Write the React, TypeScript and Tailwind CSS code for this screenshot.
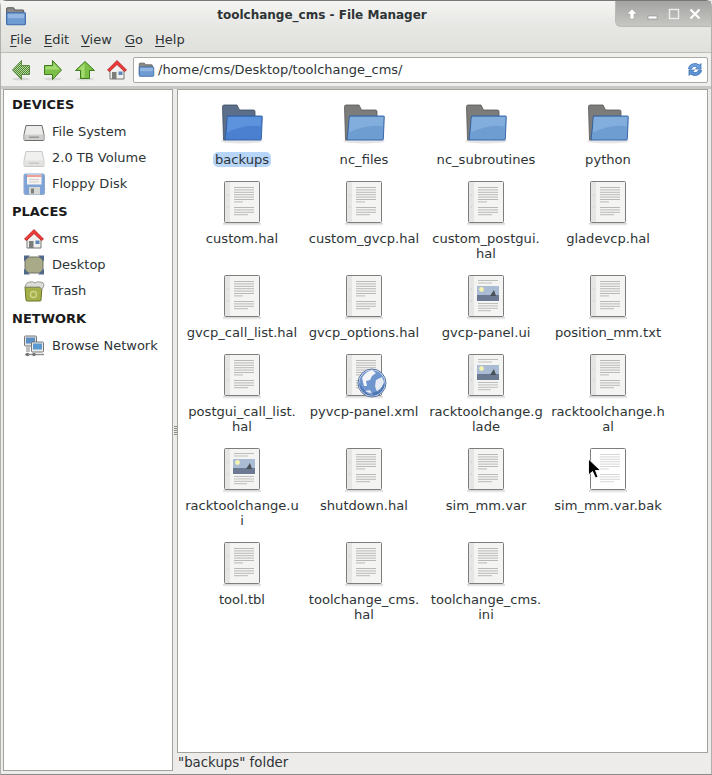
import React from 'react';

const FONT = "font-['DejaVu_Sans',sans-serif]";

// Shared small folder glyph (title bar, address bar)
const SmallFolder: React.FC<{ size: number }> = ({ size }) => (
  <svg width={size} height={size} viewBox="0 0 20 20">
    <path d="M1.5 3.5 a1 1 0 0 1 1-1 h5 l1.5 2 h7 a1 1 0 0 1 1 1 v10 h-15.5z" fill="#8a8a88" stroke="#5c5c5c" />
    <rect x="1.5" y="7" width="17" height="11" rx="0.8" fill="#6f9bd3" stroke="#3b69a8" />
    <rect x="2.5" y="8" width="15" height="4" fill="#93b6e0" />
  </svg>
);

const BigFolder: React.FC<{ dark?: boolean }> = ({ dark }) => {
  const back = dark ? '#5b6f8a' : '#7c7c7a';
  const backDark = dark ? '#3e4c60' : '#565654';
  const front = dark ? '#4a80cf' : '#6e9dd2';
  const frontLight = dark ? '#5d92dc' : '#82aedd';
  return (
    <svg width="48" height="48" viewBox="0 1 48 48">
      <ellipse cx="24" cy="41" rx="21" ry="2.5" fill="#000" opacity="0.1" />
      <path d="M4.5 6.5 a1.5 1.5 0 0 1 1.5-1.5 h13 l2.5 5 h14 a1.5 1.5 0 0 1 1.5 1.5 v5 h-27.5 l-1.5 23.5 h-2.5z" fill={back} stroke={backDark} strokeWidth="0.8" />
      <path d="M9.5 16 h34 a.8 .8 0 0 1 .8 .8 l-1 22.5 a.8 .8 0 0 1-.8 .7 h-34.5 a1 1 0 0 1-.9-1z" fill={front} stroke="#2c5da3" strokeWidth="0.9" />
      <path d="M9.8 17 h33.5 l-.5 9.5 q-15 -3 -33.8 6z" fill={frontLight} />
    </svg>
  );
};

const LINE_SET_A = [7, 9.4, 11.8, 14.2, 16.6, 19, 21.4];
const LINE_SET_B = [27, 29.4, 31.8, 34.2];

const Doc: React.FC<{ kind?: 'text' | 'image' | 'blank' | 'xml' }> = ({ kind = 'text' }) => {
  const white = kind === 'blank';
  return (
    <svg width="48" height="48" viewBox="0 0 48 48" className="overflow-visible">
      <defs>
        <linearGradient id={`shade-${kind}`} x1="0" y1="0" x2="0" y2="1">
          <stop offset="0" stopColor="#000" stopOpacity="0.18" />
          <stop offset="1" stopColor="#000" stopOpacity="0" />
        </linearGradient>
      </defs>
      <rect x="5" y="43" width="38" height="3" fill={`url(#shade-${kind})`} />
      <rect x="6.5" y="1.5" width="35" height="41" rx="1" fill={white ? '#fff' : '#f4f4f3'} stroke="#7d7d7d" />
      {!white && <rect x="7" y="2" width="5" height="40" fill="#e5e5e3" />}
      {!white && <circle cx="9.5" cy="15" r="0.6" fill="#c0c0c0" />}
      {!white && <circle cx="9.5" cy="27" r="0.6" fill="#c0c0c0" />}
      {kind === 'image' ? (
        <>
          <rect x="16" y="6" width="20" height="1" fill="#bdbdbb" />
          <rect x="16" y="8.5" width="14" height="1" fill="#bdbdbb" />
          <rect x="15" y="12" width="22" height="15" fill="#a9bcd4" />
          <rect x="15" y="21" width="22" height="6" fill="#6b7a92" />
          <circle cx="19.5" cy="15.5" r="2.4" fill="#f4f2b0" />
          <path d="M28 22 l4-6 l2 6z" fill="#4a5058" />
          <rect x="16" y="29" width="20" height="1" fill="#bdbdbb" />
          <rect x="16" y="31.4" width="20" height="1" fill="#bdbdbb" />
          <rect x="16" y="33.8" width="20" height="1" fill="#bdbdbb" />
          <rect x="16" y="36.2" width="13" height="1" fill="#bdbdbb" />
        </>
      ) : (
        <>
          {LINE_SET_A.map((y, i) => (
            <rect key={y} x="16" y={y} width={i === 6 ? 9 : 20} height="1" fill={white ? '#d8d8d8' : '#b8b8b6'} />
          ))}
          {LINE_SET_B.map((y, i) => (
            <rect key={y} x="16" y={y} width={i === 3 ? 14 : 20} height="1" fill={white ? '#d8d8d8' : '#b8b8b6'} />
          ))}
        </>
      )}
      {kind === 'xml' && (
        <g>
          <circle cx="32" cy="30" r="14" fill="#dfe7f3" stroke="#34548c" strokeWidth="0.8" />
          <circle cx="32" cy="30" r="12.8" fill="#6f95cf" />
          <path d="M22 25 q4-7 10-8 l4 3 -4 3 -2 4 -4 1 1 5 -3 0z" fill="#f3f5f8" />
          <path d="M36 27 l6-3 2 5 -3 7 -4 3 -2-6z" fill="#e6ebf3" />
          <path d="M25 38 q4 4 8 4 l-3-5z" fill="#dfe6f1" />
          <path d="M19.2 30 a12.8 12.8 0 0 0 25.6 0 q-6 9 -13 10 q-8 0 -12.6 -10z" fill="#2d5a9e" opacity="0.5" />
        </g>
      )}
    </svg>
  );
};

const Arrow: React.FC<{ dir: 'left' | 'right' | 'up'; dim?: boolean }> = ({ dir, dim }) => {
  const rot = dir === 'left' ? 180 : dir === 'up' ? -90 : 0;
  return (
    <svg width="22" height="22" viewBox="0 0 22 22">
      {dim && (
        <defs>
          <pattern id="dots" width="2" height="2" patternUnits="userSpaceOnUse">
            <rect width="1" height="1" fill="#4f8a2e" />
            <rect x="1" y="1" width="1" height="1" fill="#4f8a2e" />
            <rect x="1" width="1" height="1" fill="#b5d5a0" />
            <rect y="1" width="1" height="1" fill="#b5d5a0" />
          </pattern>
        </defs>
      )}
      <ellipse cx="11" cy="20" rx="9" ry="1.5" fill="#000" opacity="0.1" />
      <g transform={`rotate(${rot} 11 11)`}>
        <path
          d="M2.5 6.5 h8 v-5 l9 9.5 -9 9.5 v-5 h-8z"
          fill={dim ? 'url(#dots)' : '#7cc04a'}
          stroke={dim ? '#5c8a44' : '#3f7d1c'}
        />
        {!dim && <path d="M3.5 7.5 h8 v-3.5 l6 6.5 h-14z" fill="#a6db72" />}
      </g>
    </svg>
  );
};

const Home: React.FC<{ size: number }> = ({ size }) => (
  <svg width={size} height={size} viewBox="0 0 22 22">
    <path d="M4 10 v10 h14 v-10 l-7-6z" fill="#f0f0ee" stroke="#777" />
    <rect x="6" y="13" width="4.5" height="7" fill="#7c7c7a" />
    <rect x="12.5" y="12.5" width="4" height="3.5" fill="#5f86b8" />
    <path d="M1.5 11 L11 1.5 L20.5 11 L18.5 12.5 L11 5.5 L3.5 12.5z" fill="#ef3a3a" stroke="#b01818" strokeWidth="0.8" />
  </svg>
);

const Drive: React.FC<{ light?: boolean }> = ({ light }) => (
  <svg width="22" height="22" viewBox="0 0 22 22">
    <path d="M3 4.5 h16 l2 9 v5 a1 1 0 0 1-1 1 h-18 a1 1 0 0 1-1-1 v-5z" fill={light ? '#f0f0ee' : '#ececea'} stroke={light ? '#c8c8c6' : '#6e6e6c'} />
    <rect x="1.5" y="13.5" width="19" height="5.5" fill={light ? '#e2e2e0' : '#cfcfcd'} />
    <rect x="6" y="15.5" width="10" height="1.5" fill={light ? '#c8c8c6' : '#9a9a98'} />
  </svg>
);

const Floppy = () => (
  <svg width="22" height="22" viewBox="0 0 22 22">
    <rect x="1" y="1" width="20.5" height="20.5" rx="1.5" fill="#7fa3d6" stroke="#8ba8d0" />
    <rect x="4" y="1.5" width="14.5" height="10" fill="#f7f3f1" />
    <rect x="4" y="2" width="14.5" height="2" fill="#ef9d97" />
    <rect x="6" y="6" width="10" height="0.8" fill="#c8c8c8" />
    <rect x="6" y="8.5" width="10" height="0.8" fill="#c8c8c8" />
    <rect x="6" y="14" width="11" height="7.5" fill="#d7d7d5" />
    <rect x="8" y="15.5" width="3" height="5" fill="#808080" />
  </svg>
);

const DesktopIcon = () => (
  <svg width="22" height="22" viewBox="0 0 22 22">
    <rect x="2" y="3" width="18" height="16" rx="5" fill="#a8aa88" stroke="#6f7062" />
    <path d="M1 1.5 h6 l-6 6z M21 1.5 h-6 l6 6z M1 20.5 h6 l-6 -6z M21 20.5 h-6 l6 -6z" fill="#52688a" />
  </svg>
);

const Trash = () => (
  <svg width="22" height="22" viewBox="0 0 22 22">
    <path d="M2 7 h17 l-1 13 a1 1 0 0 1-1 1 h-13 a1 1 0 0 1-1-1z" fill="#a5b04a" stroke="#6b7428" />
    <path d="M2 7 q1-5 5-5 q3-1 5 1 q2-2 5-1 q4 0 4 3 q0 3-3 4 l-1-2 h-15z" fill="#dcdcd8" stroke="#8a8a84" strokeWidth="0.8" />
    <circle cx="10.5" cy="14.5" r="3" fill="none" stroke="#cfd78a" strokeWidth="1.4" />
  </svg>
);

const NetworkIcon = () => (
  <svg width="22" height="22" viewBox="0 0 22 22">
    <rect x="1.5" y="1" width="12" height="10" rx="1" fill="#e3e3e1" stroke="#77777a" />
    <rect x="3" y="2.5" width="9" height="6" fill="#5c8fc4" />
    <rect x="8.5" y="7" width="12" height="10" rx="1" fill="#ececea" stroke="#77777a" />
    <rect x="10" y="8.5" width="9" height="6" fill="#5a9ad0" />
    <rect x="3" y="12" width="4" height="5" fill="#bdbdbb" />
    <path d="M2 19.5 h19" stroke="#8d8d8b" strokeWidth="1.4" />
    <circle cx="4.5" cy="19.5" r="1.8" fill="#77777a" />
    <circle cx="11" cy="19.5" r="1.8" fill="#77777a" />
  </svg>
);

const Reload = () => (
  <svg width="16" height="17" viewBox="0 0 16 16">
    <path d="M1.5 7.5 a6.5 5.5 0 0 1 11-4 l1.5-1.5 v5.5 h-5.5 l1.8-1.8 a3.5 3 0 0 0 -5.8 1.8z" fill="#6fa3e0" stroke="#2f64ab" strokeWidth="0.7" />
    <path d="M14.5 8.5 a6.5 5.5 0 0 1 -11 4 l-1.5 1.5 v-5.5 h5.5 l-1.8 1.8 a3.5 3 0 0 0 5.8 -1.8z" fill="#5e95d6" stroke="#2f64ab" strokeWidth="0.7" />
  </svg>
);

const SidebarHeading: React.FC<{ children: React.ReactNode }> = ({ children }) => (
  <div className="h-[29px] pt-[1px] flex items-center pl-2 text-[13px] font-bold text-[#1a1a1a]">{children}</div>
);

const SidebarItem: React.FC<{ icon: React.ReactNode; label: string }> = ({ icon, label }) => (
  <div className="h-[26px] flex items-center pl-[19px] gap-[7px] text-[13px] text-[#2e3436]">
    <span className="w-[22px] h-[22px] shrink-0">{icon}</span>
    <span>{label}</span>
  </div>
);

interface FileEntry {
  name: string;
  icon: React.ReactNode;
  selected?: boolean;
}

const files: FileEntry[] = [
  { name: 'backups', icon: <BigFolder dark />, selected: true },
  { name: 'nc_files', icon: <BigFolder /> },
  { name: 'nc_subroutines', icon: <BigFolder /> },
  { name: 'python', icon: <BigFolder /> },
  { name: 'custom.hal', icon: <Doc /> },
  { name: 'custom_gvcp.hal', icon: <Doc /> },
  { name: 'custom_postgui.\nhal', icon: <Doc /> },
  { name: 'gladevcp.hal', icon: <Doc /> },
  { name: 'gvcp_call_list.hal', icon: <Doc /> },
  { name: 'gvcp_options.hal', icon: <Doc /> },
  { name: 'gvcp-panel.ui', icon: <Doc kind="image" /> },
  { name: 'position_mm.txt', icon: <Doc /> },
  { name: 'postgui_call_list.\nhal', icon: <Doc /> },
  { name: 'pyvcp-panel.xml', icon: <Doc kind="xml" /> },
  { name: 'racktoolchange.g\nlade', icon: <Doc kind="image" /> },
  { name: 'racktoolchange.h\nal', icon: <Doc /> },
  { name: 'racktoolchange.u\ni', icon: <Doc kind="image" /> },
  { name: 'shutdown.hal', icon: <Doc /> },
  { name: 'sim_mm.var', icon: <Doc /> },
  { name: 'sim_mm.var.bak', icon: <Doc kind="blank" /> },
  { name: 'tool.tbl', icon: <Doc /> },
  { name: 'toolchange_cms.\nhal', icon: <Doc /> },
  { name: 'toolchange_cms.\nini', icon: <Doc /> },
];

const Menu: React.FC<{ first: string; rest: string; className: string }> = ({ first, rest, className }) => (
  <span className={className}>
    <span className="underline underline-offset-2">{first}</span>
    {rest}
  </span>
);

export default function App() {
  return (
    <div className={`relative w-[712px] h-[775px] overflow-hidden bg-[#edecea] ${FONT} text-[13px] text-[#2e3436]`}>
      <div className="h-full flex flex-col rounded-t-[6px] border-t border-x border-b border-[#77777a] border-b-[#8a8a88] border-x-[#b0b0ac]">
        {/* Title bar */}
        <div className="h-[27px] flex bg-gradient-to-b from-[#f4f4f2] to-[#e6e6e3]">
          <div className="w-[26px] pl-[4px] pt-[4px]">
            <SmallFolder size={22} />
          </div>
          <div className="flex-1 flex items-center justify-center font-bold text-[12px] text-[#2e3436] pt-[1px] pl-[2px]">
            toolchange_cms - File Manager
          </div>
          <div className="w-[96px] h-[26px] rounded-bl-[6px] bg-gradient-to-b from-[#a4a4a2] to-[#c6c6c3] border-l border-b border-[#b8b8b4] flex items-center justify-around px-[5px] pt-[1px] text-white">
            <svg width="12" height="12" viewBox="0 0 12 12">
              <path d="M6 1 L11 6 H8 V11 H4 V6 H1z" fill="#fff" stroke="#999" strokeWidth="0.5" />
            </svg>
            <svg width="12" height="12" viewBox="0 0 12 12">
              <rect x="1" y="8" width="9" height="3" fill="#fff" stroke="#888" strokeWidth="0.6" />
            </svg>
            <svg width="12" height="12" viewBox="0 0 12 12">
              <rect x="1.5" y="1.5" width="9" height="9" fill="none" stroke="#eee" strokeWidth="1.4" />
            </svg>
            <svg width="12" height="12" viewBox="0 0 12 12">
              <path d="M1.5 1.5 L10.5 10.5 M10.5 1.5 L1.5 10.5" stroke="#fff" strokeWidth="2.2" />
            </svg>
          </div>
        </div>

        {/* Menu bar */}
        <div className="h-[25px] flex items-center bg-gradient-to-b from-[#e6e6e3] to-[#e0e0dc] border-b border-[#bcbcb8] pl-[9px] text-[13px]">
          <Menu first="F" rest="ile" className="w-[34px]" />
          <Menu first="E" rest="dit" className="w-[37px]" />
          <Menu first="V" rest="iew" className="w-[44px]" />
          <Menu first="G" rest="o" className="w-[30px]" />
          <Menu first="H" rest="elp" className="" />
        </div>

        {/* Toolbar */}
        <div className="h-[36px] flex items-center bg-[#efefed] pl-[9px] pr-[3px] border-b-[3px] border-[#c8c8c4]">
          <div className="w-[32px] pt-[1px]"><Arrow dir="left" dim /></div>
          <div className="w-[32px] pt-[1px]"><Arrow dir="right" /></div>
          <div className="w-[32px] pt-[1px]"><Arrow dir="up" /></div>
          <div className="w-[27px] pt-[1px]"><Home size={22} /></div>
          <div className="flex-1 h-[26px] flex items-center bg-white border border-[#a9a9a3] rounded-[2px] pl-[4px] pr-[4px]">
            <SmallFolder size={17} />
            <span className="ml-[3px] flex-1 text-[13px]">/home/cms/Desktop/toolchange_cms/</span>
            <Reload />
          </div>
        </div>

        {/* Main area */}
        <div className="flex-1 min-h-0 flex pl-[2px] pb-[3px]">
          <div className="w-[170px] bg-white border border-[#a3a39d]">
            <SidebarHeading>DEVICES</SidebarHeading>
            <SidebarItem icon={<Drive />} label="File System" />
            <SidebarItem icon={<Drive light />} label="2.0 TB Volume" />
            <SidebarItem icon={<Floppy />} label="Floppy Disk" />
            <SidebarHeading>PLACES</SidebarHeading>
            <SidebarItem icon={<Home size={22} />} label="cms" />
            <SidebarItem icon={<DesktopIcon />} label="Desktop" />
            <SidebarItem icon={<Trash />} label="Trash" />
            <SidebarHeading>NETWORK</SidebarHeading>
            <SidebarItem icon={<NetworkIcon />} label="Browse Network" />
          </div>

          {/* Pane handle */}
          <div className="w-[4px] flex items-center justify-center">
            <div className="w-[3px] h-[9px] bg-[repeating-linear-gradient(to_bottom,#8a8a86_0,#8a8a86_1px,transparent_1px,transparent_2px)]" />
          </div>

          <div className="flex-1 min-w-0 flex flex-col">
            <div className="flex-1 min-h-0 bg-white border border-[#a3a39d] pt-[11px] pl-[3px]">
              <div className="grid grid-cols-[repeat(4,122px)] items-start">
                {files.map((f) => (
                  <div key={f.name} className="flex flex-col items-center pb-[13px]">
                    <div className="w-[48px] h-[48px]">{f.icon}</div>
                    <div
                      className={`mt-[3px] px-[2px] leading-[15px] text-center whitespace-pre-line rounded-[5px] text-[13.1px] text-[#2e3436] ${
                        f.selected ? 'bg-[#b8d5fa]' : ''
                      }`}
                    >
                      {f.name}
                    </div>
                  </div>
                ))}
              </div>
            </div>
            <div className="h-[18px] pt-[2px] flex items-center pl-[1px] text-[13.33px]">"backups" folder</div>
          </div>
          <div className="w-[3px]" />
        </div>
      </div>

      {/* Mouse pointer caught in the screenshot */}
      <svg className="absolute left-[587px] top-[458px]" width="16" height="22" viewBox="0 0 16 22">
        <path d="M1.5 1 V17 L5.5 13.5 L8.5 20 L11 19 L8.5 12.5 H13.5z" fill="#000" stroke="#fff" strokeWidth="0.9" />
      </svg>
    </div>
  );
}
